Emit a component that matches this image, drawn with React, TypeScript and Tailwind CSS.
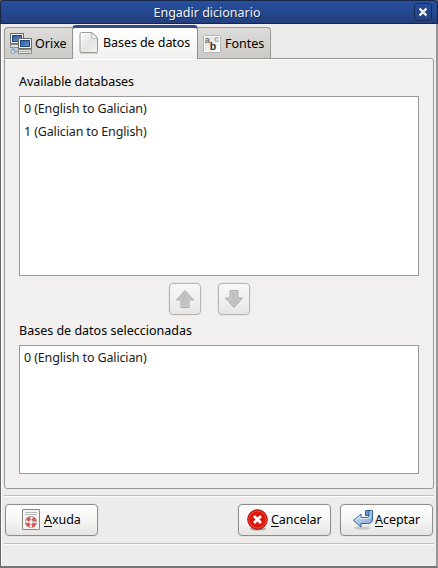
import type { ReactNode } from "react";

function ComputersIcon() {
  return (
    <svg width="22" height="22" viewBox="0 0 22 22" className="mt-[2px] shrink-0">
      <defs>
        <linearGradient id="screen" x1="0" y1="0" x2="1" y2="1">
          <stop offset="0" stopColor="#2d5c9c" />
          <stop offset="1" stopColor="#6494cf" />
        </linearGradient>
      </defs>
      <rect x=".5" y=".5" width="13" height="10" fill="#f4f4f2" stroke="#6b6d69" />
      <rect x="2.500" y="2.500" width="9" height="6" fill="url(#screen)" stroke="#1f4680" />
      <path d="M.5 11.500h13v3H.5z" fill="#e3e3e0" stroke="#858783" />
      <path d="M3.500 13.500v5h5" stroke="#8fb1dc" strokeWidth="2" fill="none" />
      <circle cx="3" cy="18.500" r="1.900" fill="#d3e2f4" stroke="#7d9fcb" />
      <rect x="8.500" y="5.500" width="13" height="10" fill="#f4f4f2" stroke="#6b6d69" />
      <rect x="10.500" y="7.500" width="9" height="6" fill="url(#screen)" stroke="#1f4680" />
      <path d="M8.500 16.500h13v4h-13z" fill="#e3e3e0" stroke="#858783" />
      <path d="M10 18.500h10" stroke="#aaa" />
    </svg>
  );
}

function PageIcon() {
  return (
    <svg width="20" height="22" viewBox="0 0 20 22" className="-mt-px shrink-0">
      <defs>
        <linearGradient id="page" x1="0" y1="0" x2="1" y2="1">
          <stop offset="0" stopColor="#fff" />
          <stop offset=".5" stopColor="#e4e5e1" />
          <stop offset="1" stopColor="#f4f4f2" />
        </linearGradient>
      </defs>
      <path d="M1 21.300h18" stroke="#000" strokeOpacity=".15" strokeWidth="1.400" />
      <path d="M2.500.5h9.500c2 0 6.500 4.500 6.500 6.500v12q0 1.500-1.500 1.500H2.500Q1 20.500 1 19V2Q1 .5 2.500.5z" fill="url(#page)" stroke="#999b96" />
      <path d="M12 1c1.500 1.500 1 4 .5 5.500C14 6 17 6 18 7c0-2-4-6-6-6z" fill="#fff" stroke="#a6a8a3" strokeWidth=".8" />
    </svg>
  );
}

function FontsIcon() {
  return (
    <svg width="18" height="18" viewBox="0 0 18 18" className="mt-[2px] shrink-0 overflow-visible">
      <defs>
        <linearGradient id="fontbg" x1="0" y1="0" x2="1" y2="1">
          <stop offset="0" stopColor="#d8d9d6" />
          <stop offset="1" stopColor="#fff" />
        </linearGradient>
      </defs>
      <rect x=".5" y=".5" width="17" height="17" rx="1" fill="url(#fontbg)" stroke="#b3b4b1" />
      <rect x="1.500" y="1.500" width="15" height="15" fill="none" stroke="#fff" />
      <g fontFamily="Liberation Sans, sans-serif" fontWeight="700">
        <text x="1.800" y="8" fontSize="9" fill="#6f716e">a</text>
        <text x="6.800" y="15" fontSize="10.500" fill="#30322f">b</text>
        <text x="11" y="7" fontSize="9" fill="#a5a7a4">c</text>
      </g>
    </svg>
  );
}

function HelpIcon() {
  return (
    <svg width="18" height="22" viewBox="0 0 18 22" className="shrink-0">
      <rect x=".5" y=".5" width="17" height="20" rx=".5" fill="#f5f5f3" stroke="#858783" />
      <path d="M3 3.500h12M3 5.500h12" stroke="#b8b9b6" />
      <circle cx="9" cy="13" r="4" fill="none" stroke="#8b8683" strokeWidth="4.200" />
      <circle cx="9" cy="13" r="4" fill="none" stroke="#f5f2ef" strokeWidth="3.200" />
      <circle cx="9" cy="13" r="4" fill="none" stroke="#d9534f" strokeWidth="3.200" strokeDasharray="4 2.283" strokeDashoffset="-1.141" />
    </svg>
  );
}

function CancelIcon() {
  return (
    <svg width="22" height="22" viewBox="0 0 22 22" className="shrink-0">
      <ellipse cx="11" cy="20" rx="8" ry="1.600" fill="#000" fillOpacity=".3" />
      <circle cx="10.500" cy="10.500" r="9.800" fill="#dd1809" stroke="#a90b08" />
      <circle cx="10.500" cy="10.500" r="8.600" fill="none" stroke="#ef5b50" strokeWidth=".8" />
      <path d="M7 7l7 7M14 7l-7 7" stroke="#fff" strokeWidth="2.800" />
    </svg>
  );
}

function AcceptIcon() {
  return (
    <svg width="22" height="22" viewBox="0 0 22 22" className="shrink-0">
      <defs>
        <linearGradient id="accept" x1="0" y1="0" x2="1" y2="1">
          <stop offset="0" stopColor="#d5e5f6" />
          <stop offset="1" stopColor="#7da7d7" />
        </linearGradient>
      </defs>
      <ellipse cx="10" cy="19" rx="8" ry="1.800" fill="#000" fillOpacity=".15" />
      <path d="M1.500 11.500L9 5v3.500h6.500q1.500 0 1.500-2h-3.500V2.500q0-1 1-1h6v8.500q0 4.500-5 4.500H9V18z" fill="url(#accept)" stroke="#375f98" strokeLinejoin="round" />
      <path d="M13.500 2.500q0-1 1-1h2.500v5h-3.500z" fill="#6d95c9" stroke="#375f98" />
      <path d="M3 11.500L8 7.200v2.300h7.500q2.500 0 2.500-3" stroke="#eef5fc" strokeWidth=".8" fill="none" />
    </svg>
  );
}

function ArrowIcon({ down = false }: { down?: boolean }) {
  return (
    <svg width="20" height="20" viewBox="0 0 20 20" className={down ? "-mt-px rotate-180" : ""}>
      <path d="M10 1.500l8.500 9.500H14v7.500H6V11H1.500z" fill="#c0c2c2" stroke="#a9abac" />
      <path d="M10 3l6.300 7H13v7.500H7V10H3.700z" fill="none" stroke="#cacccc" />
    </svg>
  );
}

const bevel = "rounded-[4px] border border-[#8f8d8a] bg-linear-to-b from-[#fefefe] via-[#f6f6f5] via-50% to-[#e5e4e2] shadow-[0_0_0_1px_#e7e6e4]";
const faintBevel = "rounded-[4px] border border-[#b7b5b2] bg-linear-to-b from-[#f8f8f7] via-[#f1f0ef] via-50% to-[#e7e6e4] shadow-[0_0_0_1px_#e9e8e6]";

function ActionButton({ icon, label, pad }: { icon: ReactNode; label: string; pad: string }) {
  return (
    <button className={`flex h-8 w-[93px] items-center tracking-[-0.05px] ${pad} ${bevel}`}>
      {icon}
      <span className="-mt-px leading-[18px]">
        <span className="underline decoration-1 underline-offset-2 [text-decoration-skip-ink:none]">{label[0]}</span>
        {label.slice(1)}
      </span>
    </button>
  );
}

function DatabaseList({ items, height }: { items: string[]; height: string }) {
  return (
    <ul className={`border border-[#9b9996] bg-white pl-[4px] tracking-[-0.13px] text-[#1a1a1a] ${height}`}>
      {items.map((item) => (
        <li key={item} className="h-[23px] leading-[23px]">{item}</li>
      ))}
    </ul>
  );
}

function Separator() {
  return <div className="h-0.5 border-t border-b border-t-[#c0bfbd] border-b-white" />;
}

export default function App() {
  return (
    <div className="flex h-[568px] w-[438px] flex-col overflow-hidden bg-[#52565e] font-['Noto_Sans','Open_Sans',sans-serif] text-[12.5px] text-black">
      <header className="flex h-6 shrink-0 items-center rounded-t-[4px] border border-[#172546] bg-linear-to-b from-[#26509f] to-[#233f7e] pr-[5px]">
        <h1 className="-ml-px flex-1 pt-[2px] text-center leading-[22px] font-normal text-[#f2f2f2] [text-shadow:1px_1px_#172b55]">Engadir dicionario</h1>
        <button className="flex h-[18px] w-[18px] items-center justify-center rounded-[3px] border border-[#172b59]">
          <svg width="10" height="10" viewBox="0 0 10 10">
            <path d="M1.500 1.500l7 7M8.500 1.500l-7 7" stroke="#152750" strokeWidth="4" />
            <path d="M1.500 1.500l7 7M8.500 1.500l-7 7" stroke="#e5e8ef" strokeWidth="2.500" />
          </svg>
        </button>
      </header>
      <main className="flex flex-1 flex-col border-r-2 border-b-2 border-l border-r-[#96979a] border-b-[#777674] border-l-[#67676a] bg-[#edecea] pr-[2px] pl-[3px] shadow-[inset_1px_0_#fff]">
        <nav className="z-10 -mb-px flex h-[35px] shrink-0 items-end">
          <div className="mb-px flex h-[31px] w-[68px] items-center rounded-tl-[4px] border border-r-0 border-b-0 border-[#9b9996] bg-linear-to-b from-[#dddcda] to-[#cccac7] pl-[5px]">
            <ComputersIcon />
            <span className="ml-[3px] pt-[2px]">Orixe</span>
          </div>
          <div className="flex h-[34px] w-[126px] items-center rounded-t-[4px] border-x border-t-[3px] border-x-[#918f8c] border-t-[#304b85] bg-linear-to-b from-white to-[#f1f0ee] pl-[6px]">
            <PageIcon />
            <span className="ml-[4px] tracking-[-0.07px]">Bases de datos</span>
          </div>
          <div className="mb-px flex h-[31px] w-[73px] items-center rounded-tr-[4px] border border-b-0 border-l-0 border-[#9b9996] bg-linear-to-b from-[#dddcda] to-[#cccac7] pl-[5px]">
            <FontsIcon />
            <span className="ml-[4px] pt-[2px]">Fontes</span>
          </div>
        </nav>
        <section className="flex h-[431px] w-[430px] shrink-0 flex-col rounded-tr-[3px] rounded-b-[3px] border border-[#9b9996] bg-[#f1f0ee] px-[14px] shadow-[inset_0_1px_#fff]">
          <h2 className="mt-[14px] mb-[5px] h-[18px] leading-[18px] font-normal tracking-[-0.05px]">Available databases</h2>
          <DatabaseList items={["0 (English to Galician)", "1 (Galician to English)"]} height="h-[180px]" />
          <div className="mt-[7px] flex gap-[17px] pl-[150px]">
            <button className={`flex h-8 w-8 items-center justify-center ${faintBevel}`}><ArrowIcon /></button>
            <button className={`flex h-8 w-8 items-center justify-center ${faintBevel}`}><ArrowIcon down /></button>
          </div>
          <h2 className="mt-[7px] mb-[5px] h-[18px] leading-[18px] font-normal">Bases de datos seleccionadas</h2>
          <DatabaseList items={["0 (English to Galician)"]} height="h-[129px]" />
        </section>
        <footer className="mt-[6px]">
          <Separator />
          <div className="flex pt-[7px] pr-px pb-[7px] pl-px">
            <ActionButton icon={<HelpIcon />} label="Axuda" pad="pl-[16px] gap-[4px]" />
            <div className="ml-auto flex gap-[9px]">
              <ActionButton icon={<CancelIcon />} label="Cancelar" pad="pl-[8px] gap-[2px]" />
              <ActionButton icon={<AcceptIcon />} label="Aceptar" pad="pl-[11px] gap-px" />
            </div>
          </div>
          <Separator />
        </footer>
      </main>
    </div>
  );
}
